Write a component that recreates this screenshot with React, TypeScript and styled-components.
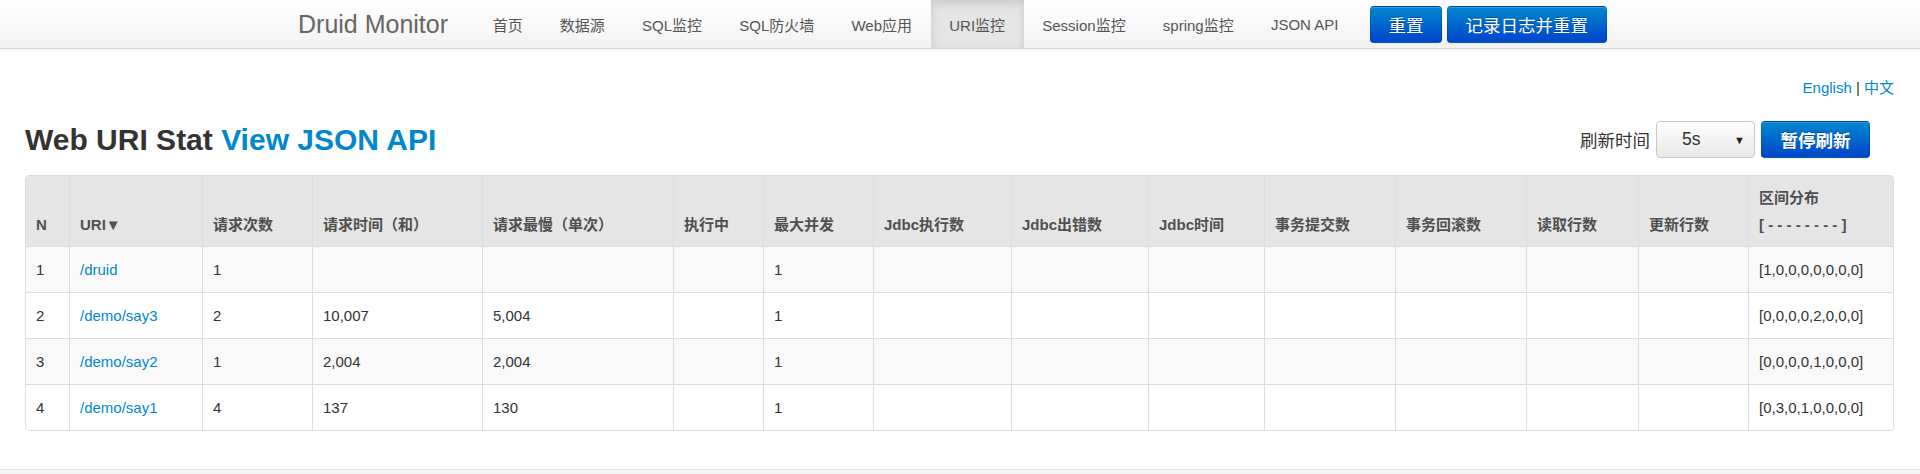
import styled, { createGlobalStyle } from 'styled-components';

const GlobalStyle = createGlobalStyle`
	body {
		margin: 0;
		font-family: "Liberation Sans", Arial, "Noto Sans CJK SC", sans-serif;
		font-size: 15px;
		color: #333;
		background: #fff;
	}
`;

const navItems = ['首页', '数据源', 'SQL监控', 'SQL防火墙', 'Web应用', 'URI监控', 'Session监控', 'spring监控', 'JSON API'];
const activeItem = 'URI监控';

const columns = [
	{ title: 'N', width: 43 },
	{ title: 'URI▼', width: 133 },
	{ title: '请求次数', width: 110 },
	{ title: '请求时间（和）', width: 170 },
	{ title: '请求最慢（单次）', width: 191 },
	{ title: '执行中', width: 90 },
	{ title: '最大并发', width: 110 },
	{ title: 'Jdbc执行数', width: 138 },
	{ title: 'Jdbc出错数', width: 137 },
	{ title: 'Jdbc时间', width: 116 },
	{ title: '事务提交数', width: 131 },
	{ title: '事务回滚数', width: 131 },
	{ title: '读取行数', width: 112 },
	{ title: '更新行数', width: 110 },
];

const rows = [
	{ uri: '/druid', count: '1', time: '', max: '', running: '', concurrent: '1', histogram: '[1,0,0,0,0,0,0,0]' },
	{ uri: '/demo/say3', count: '2', time: '10,007', max: '5,004', running: '', concurrent: '1', histogram: '[0,0,0,0,2,0,0,0]' },
	{ uri: '/demo/say2', count: '1', time: '2,004', max: '2,004', running: '', concurrent: '1', histogram: '[0,0,0,0,1,0,0,0]' },
	{ uri: '/demo/say1', count: '4', time: '137', max: '130', running: '', concurrent: '1', histogram: '[0,3,0,1,0,0,0,0]' },
];

const App = () => {
	return (
		<>
			<GlobalStyle />
			<Navbar>
				<NavContainer>
					<Brand>Druid Monitor</Brand>
					<NavList>
						{navItems.map(item => (
							<NavItem key={item} $active={item === activeItem}>
								{item}
							</NavItem>
						))}
					</NavList>
					<ButtonGroup>
						<PrimaryButton>重置</PrimaryButton>
						<PrimaryButton>记录日志并重置</PrimaryButton>
					</ButtonGroup>
				</NavContainer>
			</Navbar>

			<Main>
				<LangSwitch>
					<Link>English</Link> | <Link>中文</Link>
				</LangSwitch>

				<HeadingRow>
					<Title>
						Web URI Stat <Link>View JSON API</Link>
					</Title>
					<RefreshControls>
						<RefreshLabel>刷新时间</RefreshLabel>
						<SelectBox>
							<span>5s</span>
							<Arrow>▼</Arrow>
						</SelectBox>
						<PrimaryButton $bold>暂停刷新</PrimaryButton>
					</RefreshControls>
				</HeadingRow>

				<Table>
					<colgroup>
						{columns.map(col => (
							<Col key={col.title} $w={col.width} />
						))}
						<Col $w={145} />
					</colgroup>
					<thead>
						<tr>
							{columns.map(col => (
								<Th key={col.title}>{col.title}</Th>
							))}
							<Th>
								区间分布
								<br />[ - - - - - - - - ]
							</Th>
						</tr>
					</thead>
					<tbody>
						{rows.map((row, i) => (
							<Tr key={row.uri} $striped={i % 2 === 0}>
								<Td>{i + 1}</Td>
								<Td>
									<Link>{row.uri}</Link>
								</Td>
								<Td>{row.count}</Td>
								<Td>{row.time}</Td>
								<Td>{row.max}</Td>
								<Td>{row.running}</Td>
								<Td>{row.concurrent}</Td>
								<Td />
								<Td />
								<Td />
								<Td />
								<Td />
								<Td />
								<Td />
								<Td>{row.histogram}</Td>
							</Tr>
						))}
					</tbody>
				</Table>
			</Main>
			<Footer />
		</>
	);
};

const Navbar = styled.div`
	height: 48px;
	background-image: linear-gradient(to bottom, #ffffff, #f2f2f2);
	border-bottom: 1px solid #d4d4d4;
	box-shadow: 0 1px 4px rgba(0, 0, 0, 0.065);
`;

const NavContainer = styled.div`
	width: 1324px;
	margin: 0 auto;
	height: 100%;
	display: flex;
	align-items: center;
`;

const Brand = styled.div`
	font-size: 25px;
	color: #666;
	margin-right: 26px;
	white-space: nowrap;
`;

const NavList = styled.div`
	display: flex;
	height: 100%;
`;

const NavItem = styled.div<{ $active?: boolean }>`
	display: flex;
	align-items: center;
	padding: 0 18.6px;
	height: 100%;
	font-size: 15px;
	color: #555;
	white-space: nowrap;
	background: ${({ $active }) => ($active ? '#e5e5e5' : 'transparent')};
	box-shadow: ${({ $active }) => ($active ? 'inset 0 3px 8px rgba(0, 0, 0, 0.125)' : 'none')};
`;

const ButtonGroup = styled.div`
	display: flex;
	gap: 5px;
	margin-left: 13px;
`;

const PrimaryButton = styled.button<{ $bold?: boolean }>`
	height: 37px;
	padding: 0 ${({ $bold }) => ($bold ? '18.5px' : '17.5px')};
	font-family: inherit;
	font-size: 17.5px;
	font-weight: ${({ $bold }) => ($bold ? 'bold' : 'normal')};
	color: #fff;
	text-shadow: 0 -1px 0 rgba(0, 0, 0, 0.25);
	background-image: linear-gradient(to bottom, #0088cc, #0044cc);
	border: 1px solid rgba(0, 0, 0, 0.1);
	border-bottom-color: rgba(0, 0, 0, 0.25);
	border-radius: 4px;
	box-shadow: inset 0 1px 0 rgba(255, 255, 255, 0.2), 0 1px 2px rgba(0, 0, 0, 0.05);
	white-space: nowrap;
	cursor: pointer;
`;

const Main = styled.div`
	padding: 29px 26px 0 25px;
`;

const LangSwitch = styled.div`
	text-align: right;
	line-height: 20px;
	font-size: 15px;
`;

const Link = styled.a`
	color: #0088cc;
	text-decoration: none;
	cursor: pointer;
`;

const HeadingRow = styled.div`
	display: flex;
	justify-content: space-between;
	align-items: center;
	margin-top: 23px;
	height: 37px;
	margin-bottom: 17px;
`;

const Title = styled.h3`
	margin: 0;
	font-size: 30px;
	font-weight: bold;
	line-height: 37px;
	color: #333;
`;

const RefreshControls = styled.div`
	display: flex;
	align-items: center;
	gap: 6px;
	margin-right: 24px;
`;

const RefreshLabel = styled.span`
	font-size: 17.5px;
`;

const SelectBox = styled.div`
	box-sizing: border-box;
	width: 99px;
	height: 37px;
	padding: 0 9px 0 25px;
	display: flex;
	align-items: center;
	justify-content: space-between;
	font-size: 17.5px;
	color: #333;
	background-image: linear-gradient(to bottom, #ffffff, #e8e8e8);
	border: 1px solid #c8c8c8;
	border-radius: 4px;
`;

const Arrow = styled.span`
	font-size: 11px;
	color: #222;
`;

const Table = styled.table`
	width: 100%;
	table-layout: fixed;
	border-collapse: separate;
	border-spacing: 0;
	border: 1px solid #ddd;
	border-radius: 4px;
	overflow: hidden;
`;

const Col = styled.col<{ $w: number }>`
	width: ${({ $w }) => $w}px;
`;

const Th = styled.th`
	box-sizing: border-box;
	padding: 8px 10px;
	line-height: 27px;
	font-size: 15px;
	font-weight: bold;
	color: #505050;
	text-align: left;
	vertical-align: bottom;
	background: #e5e5e5;
	white-space: nowrap;

	& + & {
		border-left: 1px solid #ddd;
	}
`;

const Tr = styled.tr<{ $striped: boolean }>`
	background: ${({ $striped }) => ($striped ? '#f9f9f9' : '#ffffff')};
`;

const Td = styled.td`
	box-sizing: border-box;
	height: 46px;
	padding: 0 10px;
	line-height: 27px;
	font-size: 15px;
	color: #333;
	border-top: 1px solid #ddd;
	vertical-align: middle;
	white-space: nowrap;

	& + & {
		border-left: 1px solid #ddd;
	}
`;

const Footer = styled.div`
	margin-top: 38px;
	height: 40px;
	background: #f5f5f5;
	border-top: 1px solid #e5e5e5;
`;

export default App;
